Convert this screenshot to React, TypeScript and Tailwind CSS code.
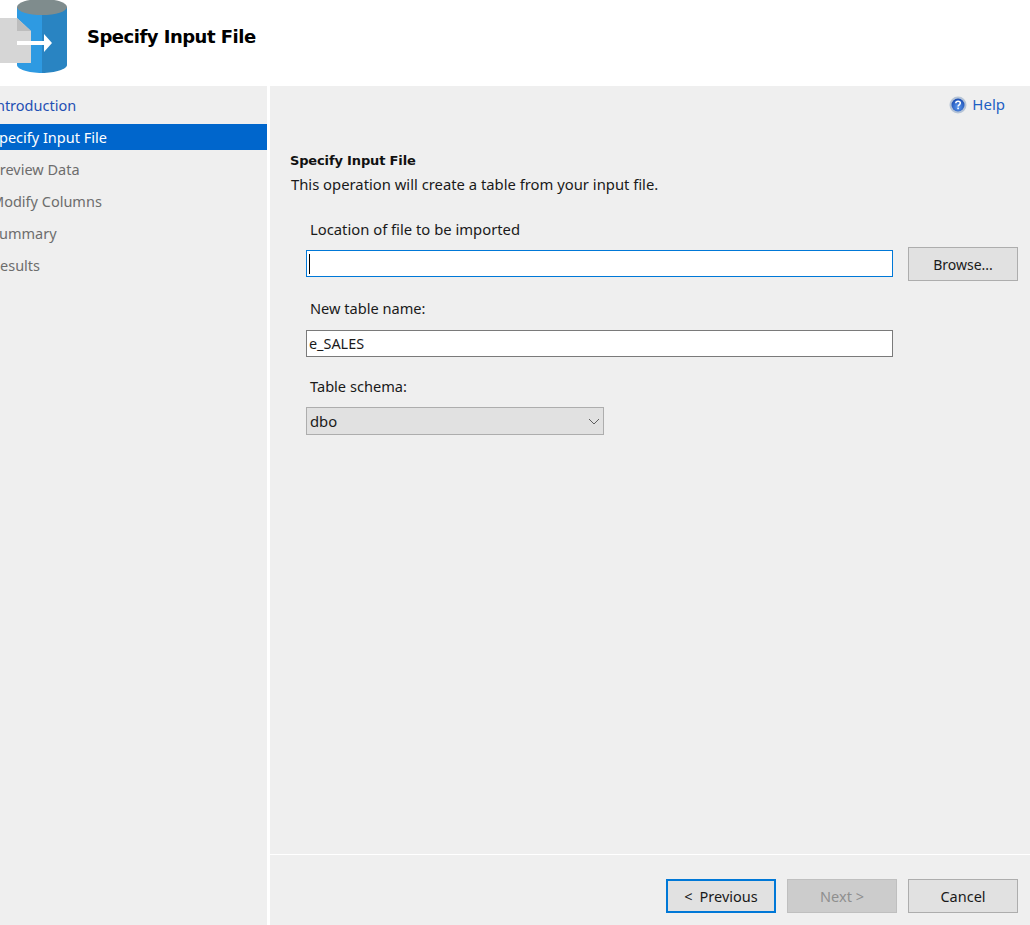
const steps = [
  { label: "Introduction", state: "link" },
  { label: "Specify Input File", state: "active" },
  { label: "Preview Data", state: "idle" },
  { label: "Modify Columns", state: "idle" },
  { label: "Summary", state: "idle" },
  { label: "Results", state: "idle" },
];

const WizardLogo = () => (
  <svg width="70" height="74" viewBox="0 0 70 74" className="shrink-0">
    <path d="M17 7v58c0 4 11 8 25 8V7z" fill="#2e9ae2" />
    <path d="M42 7v66c13 0 25-4 25-8V7z" fill="#2984c2" />
    <ellipse cx="42" cy="7" rx="25" ry="8" fill="#7f8c8d" />
    <path d="M0 18h17l14 13v32H0z" fill="#d6d6d6" />
    <path d="M17 18l14 13H17z" fill="#bdbdbd" />
    <path d="M17 41h27v-7l8 9-8 9v-7H17z" fill="#ffffff" />
  </svg>
);

const HelpIcon = () => (
  <svg width="18" height="18" viewBox="0 0 18 18" className="shrink-0">
    <defs>
      <radialGradient id="help-fill" cx="50%" cy="65%" r="60%">
        <stop offset="0%" stopColor="#5f9cf0" />
        <stop offset="100%" stopColor="#1c4fb5" />
      </radialGradient>
    </defs>
    <circle cx="9" cy="9" r="8.5" fill="#b4c3d6" />
    <circle cx="9" cy="9" r="6.5" fill="url(#help-fill)" />
    <path d="M6.8 7.2c0-1.3 1-2 2.3-2s2.2.8 2.2 1.9c0 1.7-2.2 1.7-2.2 3.4" fill="none" stroke="#fff" strokeWidth="1.5" />
    <rect x="8.3" y="11.6" width="1.6" height="1.6" fill="#fff" />
  </svg>
);

const Chevron = () => (
  <svg width="12" height="7" viewBox="0 0 12 7" className="shrink-0">
    <path d="M1 1l5 5 5-5" fill="none" stroke="#5f5f5f" strokeWidth="1" />
  </svg>
);

const App = () => {
  return (
    <div className="flex flex-col w-[1030px] h-[925px] overflow-hidden bg-white text-[14.8px] text-[#1a1a1a] font-['Noto_Sans',sans-serif]">
      {/* Header */}
      <header className="flex items-start h-[86px] shrink-0 bg-white">
        <WizardLogo />
        <h1 className="ml-[17px] mt-[24px] text-[18px] tracking-[-0.5px] leading-[26px] font-bold text-black font-['DejaVu_Sans',sans-serif]">
          Specify Input File
        </h1>
      </header>

      <div className="flex flex-1 min-h-0">
        {/* Steps */}
        <nav className="w-[267px] shrink-0 bg-[#efefef] pt-[6px] overflow-hidden text-[14.5px]">
          <div className="flex flex-col gap-[6px]">
            {steps.map((step) => (
              <div
                key={step.label}
                className={`h-[26px] leading-[26px] whitespace-nowrap ${
                  step.state === "active"
                    ? "bg-[#0066cc] text-white"
                    : step.state === "link"
                      ? "text-[#1f4fb4]"
                      : "text-[#6d6d6d]"
                }`}
              >
                <span className="block -ml-[9px]">{step.label}</span>
              </div>
            ))}
          </div>
        </nav>

        {/* Main */}
        <main className="flex flex-col flex-1 ml-[3px] bg-[#efefef]">
          <div className="flex-1 min-h-0 pl-[20px] pr-[12px]">
            <div className="flex items-center justify-end gap-[5px] h-[36px] pr-[13px] pt-[1px] text-[15px] text-[#1d5fc4]">
              <HelpIcon />
              <span>Help</span>
            </div>
            <h2 className="mt-[30px] text-[13px] tracking-[-0.15px] leading-[18px] font-bold text-[#111] font-['DejaVu_Sans',sans-serif]">
              Specify Input File
            </h2>
            <p className="ml-px mt-[3px] leading-[22px]">This operation will create a table from your input file.</p>

            <div className="ml-[16px] mt-[23px]">
              <label className="block ml-[4px] leading-[22px]">Location of file to be imported</label>
              <div className="flex items-start gap-[15px] mt-[10px]">
                <div className="flex items-center w-[587px] h-[27px] bg-white border border-[#0078d7] pl-[2px]">
                  <div className="w-px h-[20px] bg-black" />
                </div>
                <button className="w-[110px] h-[34px] -mt-[3px] bg-[#e1e1e1] border border-[#adadad] text-center text-[14px]">
                  Browse...
                </button>
              </div>

              <label className="block ml-[4px] mt-[16px] leading-[22px] text-[14.6px]">New table name:</label>
              <div className="flex items-center w-[587px] h-[27px] mt-[11px] bg-white border border-[#7a7a7a] pl-[2px] text-[14.4px]">
                e_SALES
              </div>

              <label className="block ml-[4px] mt-[18px] leading-[22px] text-[14.6px]">Table schema:</label>
              <div className="flex items-center justify-between w-[298px] h-[28px] mt-[10px] bg-[#e1e1e1] border border-[#adadad] pl-[3px] pr-[3px]">
                <span>dbo</span>
                <Chevron />
              </div>
            </div>
          </div>

          {/* Footer */}
          <footer className="flex justify-end gap-[11px] h-[71px] shrink-0 border-t border-white pt-[24px] pr-[12px] text-[14.5px]">
            <button className="flex items-center justify-center gap-[7px] w-[110px] h-[34px] pt-px bg-[#e1e1e1] border-2 border-[#0078d7]">
              <span>&lt;</span>
              <span>Previous</span>
            </button>
            <button className="w-[110px] h-[34px] pt-px bg-[#cccccc] border border-[#bfbfbf] text-[#8f8f8f]">Next &gt;</button>
            <button className="w-[110px] h-[34px] pt-px bg-[#e1e1e1] border border-[#adadad]">Cancel</button>
          </footer>
        </main>
      </div>
    </div>
  );
};

export default App;
